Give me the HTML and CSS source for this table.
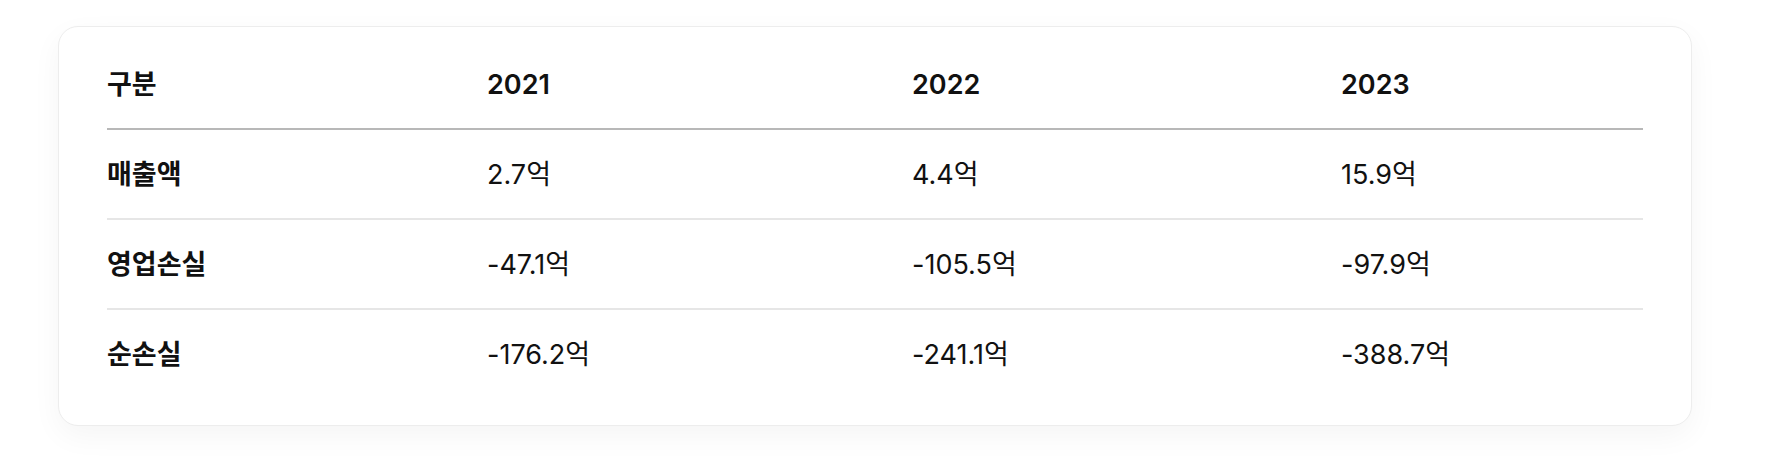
FILE: index.html
```html
<!DOCTYPE html>
<html lang="ko">
<head>
<meta charset="utf-8">
<link rel="stylesheet" href="styles.css">
</head>
<body>
<div class="page">
  <div class="card">
    <table class="fin">
      <colgroup>
        <col class="c1"><col class="c2"><col class="c3"><col class="c4">
      </colgroup>
      <thead>
        <tr><th>구분</th><th>2021</th><th>2022</th><th>2023</th></tr>
      </thead>
      <tbody>
        <tr><th>매출액</th><td>2.7억</td><td>4.4억</td><td>15.9억</td></tr>
        <tr><th>영업손실</th><td>-47.1억</td><td>-105.5억</td><td>-97.9억</td></tr>
        <tr><th>순손실</th><td>-176.2억</td><td>-241.1억</td><td>-388.7억</td></tr>
      </tbody>
    </table>
  </div>
</div>
</body>
</html>
```

FILE: styles.css
```css
html, body {
  margin: 0;
  padding: 0;
  background: #ffffff;
}
body {
  font-family: Inter, "Noto Sans CJK KR", sans-serif;
  color: #111111;
}
.page {
  padding: 26px 74px 40px 58px;
}
.card {
  background: #fff;
  border: 1px solid #ededed;
  border-radius: 20px;
  padding: 24px 48px 27px 48px;
  box-shadow: 0 10px 30px rgba(0, 0, 0, 0.045);
}
.fin {
  width: 100%;
  border-collapse: collapse;
  table-layout: fixed;
  font-size: 27px;
  line-height: 32px;
}
.c1 { width: 380px; }
.c2 { width: 425px; }
.c3 { width: 429px; }
.c4 { width: auto; }
.fin th, .fin td {
  text-align: left;
  padding: 29px 0 27px 0;
  white-space: nowrap;
}
.fin th { font-weight: 600; }
.fin td { font-weight: 400; }
.fin thead th {
  padding: 18px 0 27px 0;
  border-bottom: 2px solid #b8b8b8;
}
.fin tbody tr { border-bottom: 2px solid #e6e6e6; }
.fin tbody tr:last-child { border-bottom: none; }
```
